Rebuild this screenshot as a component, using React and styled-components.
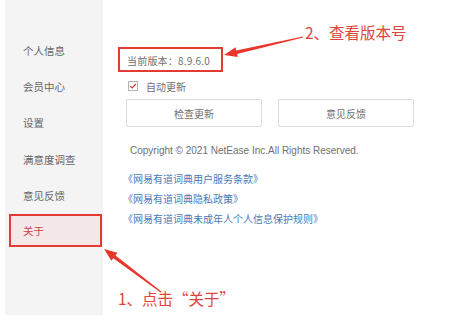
import React from 'react';
import styled, { createGlobalStyle } from 'styled-components';

const GlobalStyle = createGlobalStyle`
  html, body {
    margin: 0;
    padding: 0;
    background: #ffffff;
  }
  body {
    font-family: "Liberation Sans", "Noto Sans CJK SC", sans-serif;
  }
`;

const menu = ['个人信息', '会员中心', '设置', '满意度调查', '意见反馈', '关于'];
const links = [
  '《网易有道词典用户服务条款》',
  '《网易有道词典隐私政策》',
  '《网易有道词典未成年人个人信息保护规则》'
];

// tapered arrow polygon from tail to tip
const arrowPoints = (x1, y1, x2, y2, head = 13, headW = 5, tailW = 0.6, neckW = 1.8) => {
  const dx = x2 - x1;
  const dy = y2 - y1;
  const len = Math.hypot(dx, dy);
  const ux = dx / len;
  const uy = dy / len;
  const nx = -uy;
  const ny = ux;
  const bx = x2 - ux * head;
  const by = y2 - uy * head;
  const pts = [
    [x1 + nx * tailW, y1 + ny * tailW],
    [bx + nx * neckW, by + ny * neckW],
    [bx + nx * headW, by + ny * headW],
    [x2, y2],
    [bx - nx * headW, by - ny * headW],
    [bx - nx * neckW, by - ny * neckW],
    [x1 - nx * tailW, y1 - ny * tailW]
  ];
  return pts.map(p => p.map(v => v.toFixed(1)).join(',')).join(' ');
};

class App extends React.Component {
  render() {
    return (
      <Page>
        <GlobalStyle />
        <Sidebar>
          {menu.map(item => (
            <MenuItem key={item} active={item === '关于'}>{item}</MenuItem>
          ))}
        </Sidebar>
        <Main>
          <VersionBox>当前版本：8.9.6.0</VersionBox>
          <CheckRow>
            <CheckBox>
              <svg width="8" height="8" viewBox="0 0 8 8">
                <path d="M1.2 4.2 L3.2 6 L6.8 2" fill="none" stroke="#d04040" strokeWidth="1.2" />
              </svg>
            </CheckBox>
            <span>自动更新</span>
          </CheckRow>
          <ButtonRow>
            <Button>检查更新</Button>
            <Button>意见反馈</Button>
          </ButtonRow>
          <Copyright>Copyright © 2021 NetEase Inc.All Rights Reserved.</Copyright>
          <LinkList>
            {links.map(link => <LinkItem key={link}>{link}</LinkItem>)}
          </LinkList>
        </Main>
        <Overlay width="470" height="320" viewBox="0 0 470 320">
          <polygon points={arrowPoints(161, 292, 104, 249)} fill="#e8362b" />
          <polygon points={arrowPoints(303, 37, 224, 55)} fill="#e8362b" />
        </Overlay>
        <Note top={22} left={305}>2、查看版本号</Note>
        <Note top={288} left={118}>1、点击“关于”</Note>
      </Page>
    );
  }
}

const Page = styled.div`
  position: relative;
  display: flex;
  width: 470px;
  height: 320px;
  overflow: hidden;
  background: #ffffff;
`;

const Sidebar = styled.div`
  display: flex;
  flex-direction: column;
  margin-left: 5px;
  width: 98px;
  height: 315px;
  padding-top: 32px;
  box-sizing: border-box;
  background: #f4f4f4;
  flex-shrink: 0;
`;

const MenuItem = styled.div`
  display: flex;
  align-items: center;
  height: ${p => (p.active ? '33px' : '36.3px')};
  margin: ${p => (p.active ? '1px 1px 0 4px' : '0')};
  padding-left: ${p => (p.active ? '12px' : '18px')};
  box-sizing: border-box;
  border: ${p => (p.active ? '2px solid #e23b32' : 'none')};
  background: ${p => (p.active ? '#f5e8e8' : 'transparent')};
  color: ${p => (p.active ? '#c8453d' : '#666666')};
  font-size: 10.5px;
  font-family: "Noto Sans CJK SC", sans-serif;
`;

const Main = styled.div`
  display: flex;
  flex-direction: column;
  align-items: flex-start;
  padding: 47px 0 0 15px;
  font-family: "Noto Sans CJK SC", sans-serif;
  color: #707070;
  font-size: 10px;
`;

const VersionBox = styled.div`
  display: flex;
  align-items: center;
  height: 25px;
  width: 105px;
  box-sizing: border-box;
  padding: 2px 0 0 7px;
  border: 2px solid #e23b32;
  letter-spacing: 0.2px;
`;

const CheckRow = styled.div`
  display: flex;
  align-items: center;
  gap: 8px;
  height: 12px;
  margin: 8px 0 0 10px;
`;

const CheckBox = styled.span`
  display: flex;
  align-items: center;
  justify-content: center;
  width: 10px;
  height: 10px;
  box-sizing: border-box;
  border: 1px solid #b5b5b5;
  background: #ffffff;
`;

const ButtonRow = styled.div`
  display: flex;
  gap: 16px;
  margin: 7px 0 0 8px;
`;

const Button = styled.div`
  display: flex;
  align-items: center;
  justify-content: center;
  width: 136px;
  height: 28px;
  box-sizing: border-box;
  border: 1px solid #dcdcdc;
  border-radius: 2px;
  background: #ffffff;
  color: #707070;
  font-size: 10px;
`;

const Copyright = styled.div`
  margin: 17px 0 0 12px;
  line-height: 14px;
  font-family: "Liberation Sans", sans-serif;
  font-size: 10px;
  color: #707070;
`;

const LinkList = styled.div`
  display: flex;
  flex-direction: column;
  gap: 2px;
  margin: 12px 0 0 5px;
`;

const LinkItem = styled.div`
  line-height: 18px;
  font-size: 10px;
  color: #4a78b8;
`;

const Overlay = styled.svg`
  position: absolute;
  left: 0;
  top: 0;
  pointer-events: none;
`;

const Note = styled.div`
  position: absolute;
  top: ${p => p.top}px;
  left: ${p => p.left}px;
  font-family: "Noto Sans CJK SC", sans-serif;
  font-size: 15.5px;
  line-height: 20px;
  color: #e0453d;
  white-space: nowrap;
`;

export default App;
